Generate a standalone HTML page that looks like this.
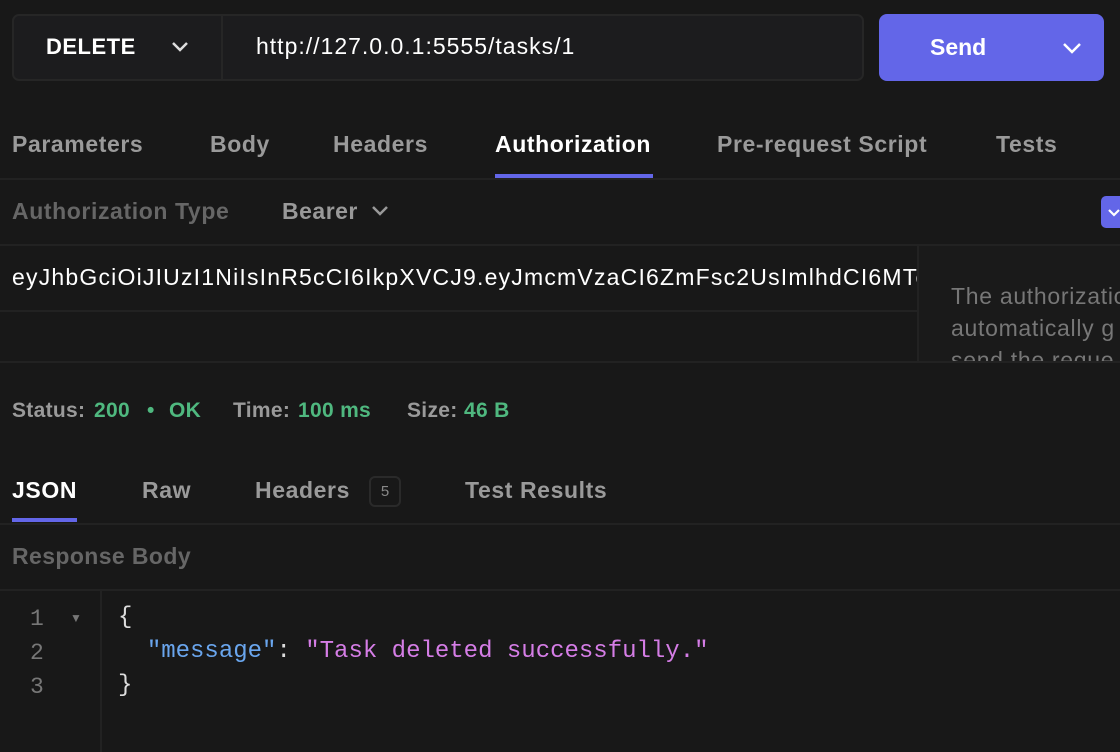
<!DOCTYPE html>
<html><head><meta charset="utf-8"><style>
*{margin:0;padding:0;box-sizing:border-box}
body{width:1120px;height:752px;background:#181818;font-family:"Liberation Sans",sans-serif;position:relative;overflow:hidden;color:#fff}
.a{position:absolute;white-space:nowrap}
.hl{position:absolute;left:0;right:0;height:2px;background:#222}
.tab{font-size:23px;font-weight:bold;letter-spacing:0.6px;color:#9a9a9a;top:131px}
.rt{font-size:23px;font-weight:bold;letter-spacing:0.6px;color:#9a9a9a;top:477px}
.st{font-size:21px;font-weight:bold;letter-spacing:0.3px;top:399px;color:#9a9a9a}
.g{color:#4fb87f}
svg{position:absolute}
.code{font-family:"Liberation Mono",monospace;font-size:23px}
</style></head><body>
<div class="a" style="left:12px;top:14px;width:852px;height:67px;border:2px solid #262626;border-radius:7px;background:#1c1c1e"></div>
<div class="a" style="left:221px;top:16px;width:2px;height:63px;background:#262626"></div>
<div class="a" style="left:46px;top:34px;font-size:22px;font-weight:bold;letter-spacing:0.5px">DELETE</div>
<svg style="left:171px;top:41px" width="18" height="12" viewBox="0 0 18 12"><path d="M2 2l7 7 7-7" stroke="#ddd" stroke-width="2.5" fill="none"/></svg>
<div class="a" style="left:256px;top:33px;font-size:23px;letter-spacing:1px">http://127.0.0.1:5555/tasks/1</div>
<div class="a" style="left:879px;top:14px;width:225px;height:67px;background:#6366e8;border-radius:8px"></div>
<div class="a" style="left:930px;top:34px;font-size:23px;font-weight:bold">Send</div>
<svg style="left:1062px;top:42px" width="20" height="12" viewBox="0 0 20 12"><path d="M2 2l8 8 8-8" stroke="#fff" stroke-width="2.5" fill="none"/></svg>

<div class="a tab" style="left:12px">Parameters</div>
<div class="a tab" style="left:210px">Body</div>
<div class="a tab" style="left:333px">Headers</div>
<div class="a tab" style="left:495px;color:#fff">Authorization</div>
<div class="a tab" style="left:717px">Pre-request Script</div>
<div class="a tab" style="left:996px">Tests</div>
<div class="hl" style="top:178px"></div>
<div class="a" style="left:495px;top:174px;width:158px;height:4px;background:#6366e8"></div>

<div class="a" style="left:12px;top:198px;font-size:23px;font-weight:bold;letter-spacing:0.6px;color:#666">Authorization Type</div>
<div class="a" style="left:282px;top:198px;font-size:23px;font-weight:bold;letter-spacing:0.5px;color:#999">Bearer</div>
<svg style="left:371px;top:205px" width="18" height="12" viewBox="0 0 18 12"><path d="M2 2l7 7 7-7" stroke="#999" stroke-width="2.5" fill="none"/></svg>
<div class="a" style="left:1101px;top:196px;width:30px;height:32px;background:#6366e8;border-radius:5px"></div>
<svg style="left:1108px;top:208px" width="12" height="10" viewBox="0 0 12 10"><path d="M1 2l5 5 5-5" stroke="#fff" stroke-width="2.2" fill="none"/></svg>
<div class="hl" style="top:244px"></div>
<div class="a" style="left:0;top:246px;width:918px;height:116px;overflow:hidden">
<div class="a" style="left:12px;top:18px;font-size:23px;letter-spacing:1.2px">eyJhbGciOiJIUzI1NiIsInR5cCI6IkpXVCJ9.eyJmcmVzaCI6ZmFsc2UsImlhdCI6MTc</div>
<div class="hl" style="top:64px"></div></div>
<div class="a" style="left:917px;top:246px;width:2px;height:116px;background:#222"></div>
<div class="a" style="left:919px;top:246px;width:201px;height:116px;overflow:hidden;background:#1a1a1a">
<div class="a" style="left:32px;top:34px;font-size:23px;letter-spacing:0.7px;color:#777;line-height:32px">The authorization<br>automatically g<br>send the reque</div></div>
<div class="hl" style="top:361px"></div>

<div class="a st" style="left:12px">Status:</div>
<div class="a st g" style="left:94px">200</div>
<div class="a st g" style="left:147px">•</div>
<div class="a st g" style="left:169px">OK</div>
<div class="a st" style="left:233px">Time:</div>
<div class="a st g" style="left:298px">100 ms</div>
<div class="a st" style="left:407px">Size:</div>
<div class="a st g" style="left:464px">46 B</div>

<div class="a rt" style="left:12px;color:#fff">JSON</div>
<div class="a rt" style="left:142px">Raw</div>
<div class="a rt" style="left:255px">Headers</div>
<div class="a" style="left:369px;top:476px;width:32px;height:31px;border:2px solid #2a2a2a;border-radius:6px;font-size:15px;color:#888;text-align:center;line-height:27px">5</div>
<div class="a rt" style="left:465px">Test Results</div>
<div class="hl" style="top:523px"></div>
<div class="a" style="left:12px;top:518px;width:65px;height:4px;background:#6366e8"></div>
<div class="a" style="left:12px;top:543px;font-size:23px;font-weight:bold;letter-spacing:0.4px;color:#666">Response Body</div>
<div class="hl" style="top:589px"></div>
<div class="a" style="left:100px;top:591px;width:2px;height:161px;background:#222"></div>
<div class="a code" style="left:30px;top:602px;color:#777;line-height:34px">1<br>2<br>3</div>
<div class="a" style="left:70px;top:611px;font-size:12px;color:#777">▼</div>
<div class="a code" style="left:118px;top:601px;line-height:34px;color:#ddd;font-size:24px;letter-spacing:0px">{<br>&nbsp;&nbsp;<span style="color:#6aa6ee">"message"</span>: <span style="color:#d57de6">"Task deleted successfully."</span><br>}</div>
</body></html>
